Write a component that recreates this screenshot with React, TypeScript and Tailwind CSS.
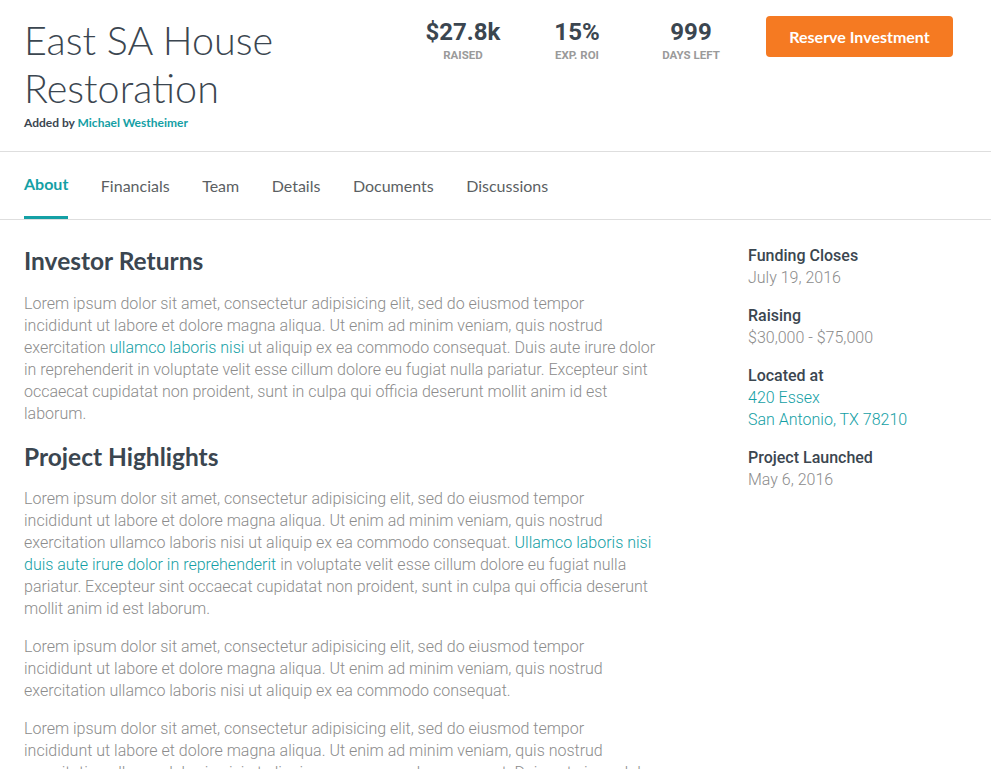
import React from "react";

const lato = { fontFamily: "Lato, 'Open Sans', sans-serif" };

function Stat({ value, label }: { value: string; label: string }) {
  return (
    <div className="flex w-[114px] flex-col items-center">
      <div className="text-[24px] font-bold leading-[30px] text-[#3b4650]" style={{ fontFamily: "Roboto, sans-serif" }}>
        {value}
      </div>
      <div className="mt-[1px] text-[11.5px] font-bold uppercase leading-[14px] text-[#9a9a9a]" style={{ fontFamily: "Roboto, sans-serif" }}>
        {label}
      </div>
    </div>
  );
}

const tabs = ["About", "Financials", "Team", "Details", "Documents", "Discussions"];

export default function App() {
  return (
    <div className="min-h-[769px] bg-white" style={{ fontFamily: "Roboto, sans-serif" }}>
      <header className="flex items-start justify-between pl-[24px] pr-[38px] pt-[16px]">
        <div>
          <h1 className="text-[39.5px] font-light leading-[48px] text-[#3b4650]" style={lato}>
            East SA House
            <br />
            Restoration
          </h1>
          <div className="mt-[3px] text-[12px] font-bold leading-[15px] text-[#3b4650]" style={lato}>
            Added by <span className="text-[#14a0a5]">Michael Westheimer</span>
          </div>
        </div>
        <div className="flex items-start">
          <div className="flex pt-[1px]">
            <Stat value="$27.8k" label="Raised" />
            <Stat value="15%" label="Exp. ROI" />
            <Stat value="999" label="Days Left" />
          </div>
          <button
            className="ml-[18px] h-[41px] w-[187px] rounded-[4px] bg-[#f57a22] pt-[1px] text-[16px] font-bold text-white"
            style={lato}
          >
            Reserve Investment
          </button>
        </div>
      </header>

      <nav className="mt-[21px] flex gap-[32.5px] border-y border-[#dedede] px-[24px]" style={lato}>
        {tabs.map((t, i) =>
          i === 0 ? (
            <div key={t} className="flex h-[67px] flex-col justify-between pt-[22px]">
              <span className="text-[16px] font-bold leading-[20px] text-[#14a0a5]">{t}</span>
              <div className="h-[3px] bg-[#14a0a5]" />
            </div>
          ) : (
            <div key={t} className="h-[67px] pt-[24px] text-[16px] leading-[20px] text-[#5b5f63]">
              {t}
            </div>
          )
        )}
      </nav>

      <main className="flex px-[24px] pt-[25px]">
        <div className="w-[640px] pt-[2px] text-[16px] font-light leading-[22px] text-[#8c8c8c]">
          <h2 className="text-[24.5px] font-bold leading-[28px] text-[#3b4650]" style={lato}>
            Investor Returns
          </h2>
          <p className="mt-[18px]">
            Lorem ipsum dolor sit amet, consectetur adipisicing elit, sed do eiusmod tempor
            <br />
            incididunt ut labore et dolore magna aliqua. Ut enim ad minim veniam, quis nostrud
            <br />
            exercitation <span className="text-[#14a0a5]">ullamco laboris nisi</span> ut aliquip ex ea commodo
            consequat. Duis aute irure dolor
            <br />
            in reprehenderit in voluptate velit esse cillum dolore eu fugiat nulla pariatur. Excepteur sint
            <br />
            occaecat cupidatat non proident, sunt in culpa qui officia deserunt mollit anim id est
            <br />
            laborum.
          </p>
          <h2 className="mt-[18px] text-[24.5px] font-bold leading-[28px] text-[#3b4650]" style={lato}>
            Project Highlights
          </h2>
          <p className="mt-[17px]">
            Lorem ipsum dolor sit amet, consectetur adipisicing elit, sed do eiusmod tempor
            <br />
            incididunt ut labore et dolore magna aliqua. Ut enim ad minim veniam, quis nostrud
            <br />
            exercitation ullamco laboris nisi ut aliquip ex ea commodo consequat.{" "}
            <span className="text-[#14a0a5]">
              Ullamco laboris nisi
              <br />
              duis aute irure dolor in reprehenderit
            </span>{" "}
            in voluptate velit esse cillum dolore eu fugiat nulla
            <br />
            pariatur. Excepteur sint occaecat cupidatat non proident, sunt in culpa qui officia deserunt
            <br />
            mollit anim id est laborum.
          </p>
          <p className="mt-[16px]">
            Lorem ipsum dolor sit amet, consectetur adipisicing elit, sed do eiusmod tempor
            <br />
            incididunt ut labore et dolore magna aliqua. Ut enim ad minim veniam, quis nostrud
            <br />
            exercitation ullamco laboris nisi ut aliquip ex ea commodo consequat.
          </p>
          <p className="mt-[16px]">
            Lorem ipsum dolor sit amet, consectetur adipisicing elit, sed do eiusmod tempor
            <br />
            incididunt ut labore et dolore magna aliqua. Ut enim ad minim veniam, quis nostrud
            <br />
            exercitation ullamco laboris nisi ut aliquip ex ea commodo consequat. Duis aute irure dolor
            <br />
            in reprehenderit in voluptate velit esse cillum dolore eu fugiat nulla pariatur.
          </p>
        </div>
        <aside className="ml-[84px] flex flex-col gap-[16px] text-[16px] leading-[22px]">
          <div>
            <div className="font-medium text-[#3b4650]">Funding Closes</div>
            <div className="font-light text-[#8c8c8c]">July 19, 2016</div>
          </div>
          <div>
            <div className="font-medium text-[#3b4650]">Raising</div>
            <div className="font-light text-[#8c8c8c]">$30,000 - $75,000</div>
          </div>
          <div>
            <div className="font-medium text-[#3b4650]">Located at</div>
            <div className="font-light text-[#14a0a5]">420 Essex</div>
            <div className="font-light text-[#14a0a5]">San Antonio, TX 78210</div>
          </div>
          <div>
            <div className="font-medium text-[#3b4650]">Project Launched</div>
            <div className="font-light text-[#8c8c8c]">May 6, 2016</div>
          </div>
        </aside>
      </main>
    </div>
  );
}
